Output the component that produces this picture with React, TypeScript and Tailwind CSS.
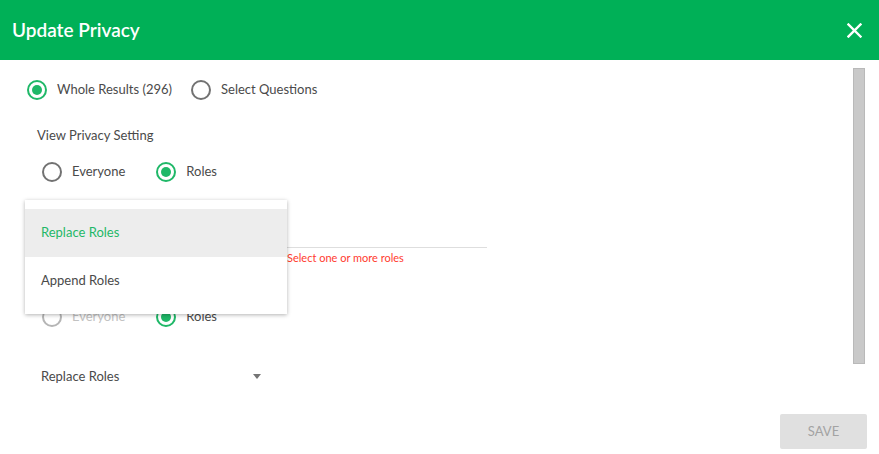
import type { ReactElement } from 'react';

function Radio({ label, checked, disabled }: { label: string; checked?: boolean; disabled?: boolean }): ReactElement {
  return (
    <div className="flex items-center">
      <span
        className={`flex h-5 w-5 items-center justify-center rounded-full border-2 ${
          checked ? 'border-[#1fb868]' : disabled ? 'border-[#b5b5b5]' : 'border-[#727272]'
        }`}
      >
        {checked && <span className="h-[10px] w-[10px] rounded-full bg-[#1fb868]" />}
      </span>
      <span className={`ml-[10px] ${disabled ? 'text-[#c2c2c2]' : 'text-[#4a4a4a]'}`}>{label}</span>
    </div>
  );
}

export default function App(): ReactElement {
  return (
    <div
      className="relative flex h-[454px] w-[879px] flex-col overflow-hidden bg-white text-[13px]"
      style={{ fontFamily: 'Lato, "Liberation Sans", sans-serif' }}
    >
      {/* Header */}
      <div className="flex h-[60px] shrink-0 items-center justify-between bg-[#00b057] pl-3 pr-[17px]">
        <h2 className="text-[19px] font-semibold text-white">Update Privacy</h2>
        <svg width="15" height="15" viewBox="0 0 15 15" className="text-white">
          <path d="M1.5 1.5 L13.5 13.5 M13.5 1.5 L1.5 13.5" stroke="currentColor" strokeWidth="2.4" strokeLinecap="square" />
        </svg>
      </div>

      {/* Body */}
      <div className="flex h-[354px] shrink-0">
        <div className="flex flex-1 flex-col pl-[27px] pt-[20px]">
          <div className="flex h-5 items-center gap-[19px]">
            <Radio label="Whole Results (296)" checked />
            <Radio label="Select Questions" />
          </div>

          <div className="mt-[27px] pl-[10px] leading-4 text-[#4a4a4a]">View Privacy Setting</div>

          <div className="mt-[19px] flex h-5 items-center gap-[31px] pl-[15px]">
            <Radio label="Everyone" />
            <Radio label="Roles" checked />
          </div>

          {/* role field (under the menu) */}
          <div className="mt-[28px] pl-[10px]">
            <div className="leading-4 text-[#4a4a4a]">Edit Privacy Setting</div>
            <div className="mt-[21px] w-[450px] border-b border-[#dedede]" />
            <div className="ml-[250px] mt-[2px] text-[11px] leading-4 text-[#ff3b2f]">Select one or more roles</div>
          </div>

          <div className="mt-[41px] flex h-5 items-center gap-[31px] pl-[15px]">
            <Radio label="Everyone" disabled />
            <Radio label="Roles" checked />
          </div>

          <div className="mt-[41px] flex w-[234px] items-center justify-between pl-[14px] leading-4 text-[#4a4a4a]">
            <span>Replace Roles</span>
            <svg width="8" height="5" viewBox="0 0 8 5">
              <path d="M0 0 L8 0 L4 5 Z" fill="#757575" />
            </svg>
          </div>
        </div>

        {/* Scrollbar */}
        <div className="mr-[14px] mt-[8px] h-[296px] w-[12px] border border-[#b9b9b9] bg-[#c9c9c9]" />
      </div>

      {/* Footer */}
      <div className="flex flex-1 items-start justify-end pr-[12px]">
        <button
          type="button"
          className="h-[35px] w-[87px] rounded-[2px] bg-[#e0e0e0] text-[13px] text-[#a3a3a3]"
        >
          SAVE
        </button>
      </div>

      {/* Open menu */}
      <div className="absolute left-[25px] top-[200px] w-[262px] bg-white py-[9px] shadow-[0_1px_4px_rgba(0,0,0,0.3)]">
        <div className="flex h-12 items-center bg-[#ededed] pl-4 text-[#1fb868]">Replace Roles</div>
        <div className="flex h-12 items-center pl-4 text-[#4a4a4a]">Append Roles</div>
      </div>
    </div>
  );
}
